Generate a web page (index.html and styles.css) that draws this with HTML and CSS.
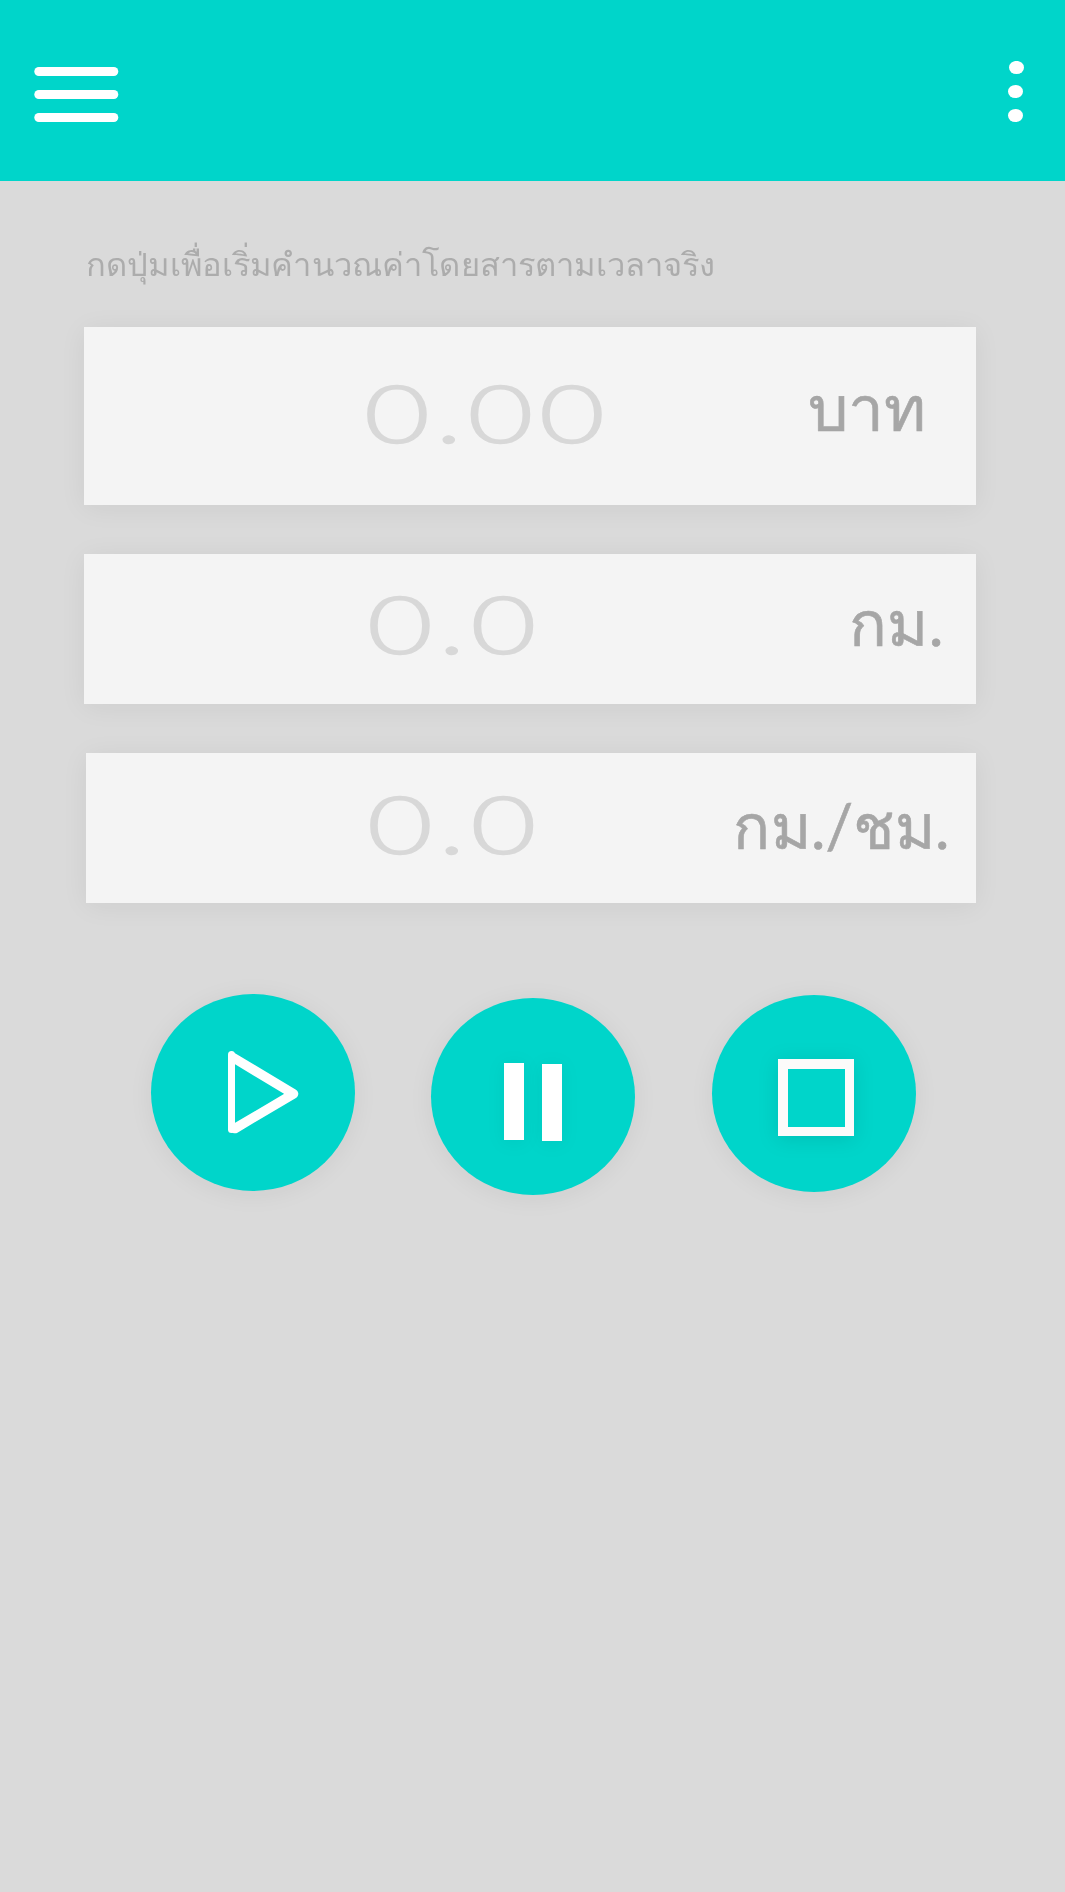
FILE: index.html
```html
<!DOCTYPE html>
<html lang="th">
<head>
<meta charset="utf-8">
<title>คำนวณค่าโดยสาร</title>
<link rel="stylesheet" href="styles.css">
</head>
<body>
<header class="topbar">
  <svg class="menu" width="86" height="58" viewBox="0 0 86 58" fill="#fff">
    <rect x="0.3" y="1" width="84" height="9" rx="4.5"/>
    <rect x="0.3" y="24" width="84" height="9" rx="4.5"/>
    <rect x="0.3" y="47" width="84" height="9" rx="4.5"/>
  </svg>
  <svg class="more" width="17" height="62" viewBox="0 0 17 62" fill="#fff">
    <ellipse cx="8.5" cy="6.5" rx="7.5" ry="6.6"/>
    <ellipse cx="7.5" cy="30.5" rx="7.5" ry="6.6"/>
    <ellipse cx="7.5" cy="54.5" rx="7.5" ry="6.6"/>
  </svg>
</header>
<main class="meter">
  <p class="hint"><span class="hint-text">กดปุ่มเพื่อเริ่มคำนวณค่าโดยสารตามเวลาจริง</span></p>
  <section class="card fare">
    <div class="value"><span class="digits">0.00</span></div>
    <div class="unit"><span class="unit-text">บาท</span></div>
  </section>
  <section class="card distance">
    <div class="value"><span class="digits">0.0</span></div>
    <div class="unit"><span class="unit-text">กม.</span></div>
  </section>
  <section class="card speed">
    <div class="value"><span class="digits">0.0</span></div>
    <div class="unit"><span class="unit-text">กม./ชม.</span></div>
  </section>
  <div class="controls">
    <button class="control play" aria-label="เริ่ม">
      <svg width="204" height="197" viewBox="0 0 204 197">
        <path d="M80.5 60.5V135.5" fill="none" stroke="#fff" stroke-width="7" stroke-linecap="round"/>
        <path d="M82 63.5L142.5 99.8L84 134.5" fill="none" stroke="#fff" stroke-width="9.6" stroke-linecap="round" stroke-linejoin="round"/>
      </svg>
    </button>
    <button class="control pause" aria-label="หยุดชั่วคราว">
      <svg width="204" height="197" viewBox="0 0 204 197" fill="#fff">
        <rect class="mark" x="73" y="65" width="20" height="77"/>
        <rect class="mark" x="111" y="66" width="20" height="77"/>
      </svg>
    </button>
    <button class="control stop" aria-label="หยุด">
      <svg width="204" height="197" viewBox="0 0 204 197">
        <rect class="mark strong" x="66" y="64" width="76" height="77" fill="#fcfbfa"/>
        <rect x="76" y="74" width="57" height="58" fill="#00d5ca"/>
      </svg>
    </button>
  </div>
</main>
</body>
</html>
```
FILE: styles.css
```css
* { box-sizing: border-box; }

body {
  margin: 0;
  min-height: 1892px;
  background: #dadada;
  font-family: Lato, "Liberation Sans", sans-serif;
}

.topbar {
  display: flex;
  justify-content: space-between;
  align-items: flex-start;
  height: 181px;
  padding: 61px 40px 0 34px;
  background: #00d5ca;
}
.menu { margin-top: 5px; }
.menu, .more, .control svg { display: block; }

.meter { padding: 45px 89px 0 84px; }

.hint {
  height: 101px;
  margin: 0;
  padding-left: 2px;
  color: #acacac;
  font-size: 32.5px;
  line-height: 75px;
  white-space: nowrap;
}
.hint-text, .digits, .unit-text {
  display: inline-block;
  transform-origin: 0 50%;
}
.hint-text { transform: scaleX(1.007); }

.card {
  display: grid;
  grid-template-columns: 1fr 246px;
  height: 150px;
  margin-bottom: 49px;
  background: #f4f4f4;
  box-shadow: 0 3px 26px rgba(0, 0, 0, 0.06);
  white-space: nowrap;
}
.fare { height: 178px; }
.speed { margin-left: 2px; }

.value {
  padding-left: 280px;
  color: #d8d8d8;
  font-weight: 300;
  font-size: 80px;
  line-height: 170px;
}
.digits {
  transform: scaleX(1.42);
  letter-spacing: 3.9px;
  -webkit-text-stroke: 1.4px #d8d8d8;
}
.distance .value { padding-left: 283px; line-height: 139px; }
.speed .value { padding-left: 281px; line-height: 141px; }

.unit {
  color: #a6a6a6;
  font-size: 62px;
  line-height: 160px;
}
.unit-text {
  transform: scaleX(1.03);
  -webkit-text-stroke: 0.6px #a6a6a6;
}
.fare .unit { padding-left: 78px; }
.distance .unit { padding-left: 119px; line-height: 136px; }
.distance .unit-text { transform: scaleX(1.01); }
.speed .unit { padding-left: 3px; line-height: 144px; }
.speed .unit-text { transform: scaleX(0.987); }

.controls {
  display: grid;
  grid-template-columns: repeat(3, 204px);
  column-gap: 76px;
  align-items: start;
  padding: 42px 0 0 67px;
}
.control {
  width: 204px;
  height: 197px;
  padding: 0;
  border: 0;
  border-radius: 50%;
  background: #00d5ca;
  box-shadow: 0 3px 26px rgba(0, 0, 0, 0.06);
}
.pause { margin-top: 4px; }
.stop { margin: 1px 0 0 1px; }
.mark { filter: drop-shadow(0 2px 9px rgba(0, 0, 0, 0.05)); }
.strong { filter: drop-shadow(0 3px 10px rgba(0, 0, 0, 0.1)); }
```
